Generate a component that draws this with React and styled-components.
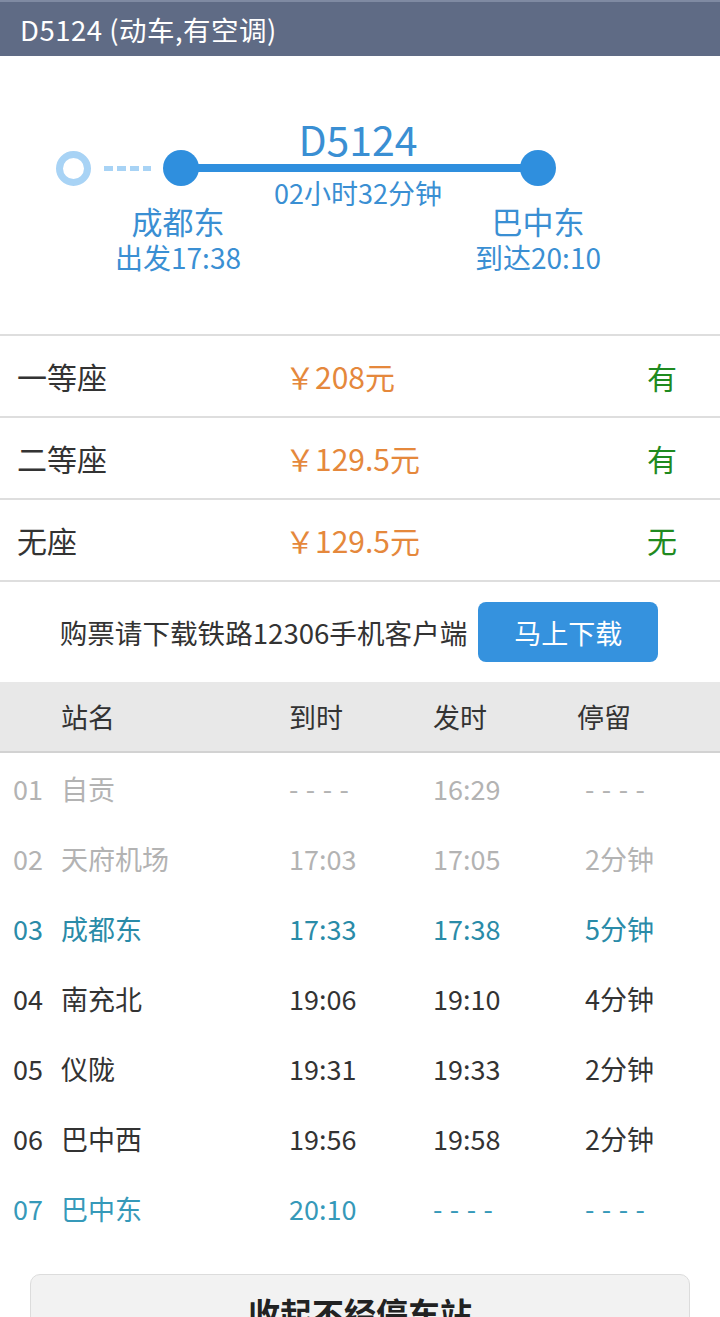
import React from "react";
import styled, { createGlobalStyle } from "styled-components";

const GlobalStyle = createGlobalStyle`
  html, body {
    margin: 0;
    padding: 0;
    background: #fff;
    font-family: "Noto Sans CJK SC", "Noto Sans", sans-serif;
  }
  * { box-sizing: border-box; }
`;

const seats = [
  { name: "一等座", price: "￥208元", left: "有" },
  { name: "二等座", price: "￥129.5元", left: "有" },
  { name: "无座", price: "￥129.5元", left: "无" },
];

const stops = [
  { no: "01", name: "自贡", arrive: "----", depart: "16:29", stay: "----", kind: "past" },
  { no: "02", name: "天府机场", arrive: "17:03", depart: "17:05", stay: "2分钟", kind: "past" },
  { no: "03", name: "成都东", arrive: "17:33", depart: "17:38", stay: "5分钟", kind: "start" },
  { no: "04", name: "南充北", arrive: "19:06", depart: "19:10", stay: "4分钟", kind: "normal" },
  { no: "05", name: "仪陇", arrive: "19:31", depart: "19:33", stay: "2分钟", kind: "normal" },
  { no: "06", name: "巴中西", arrive: "19:56", depart: "19:58", stay: "2分钟", kind: "normal" },
  { no: "07", name: "巴中东", arrive: "20:10", depart: "----", stay: "----", kind: "end" },
];

const stopColors = {
  past: "#b3b3b3",
  start: "#2a8ba8",
  normal: "#333333",
  end: "#3699b9",
};

const Cell = ({ value }) =>
  value === "----" ? <Dash>----</Dash> : <span>{value}</span>;

const App = () => {
  return (
    <Page>
      <GlobalStyle />
      <TopBar>D5124 (动车,有空调)</TopBar>

      <Route>
        <TrainNo>D5124</TrainNo>
        <Track>
          <Ring />
          <Dashes />
          <Dot />
          <Line />
          <Dot />
        </Track>
        <Duration>02小时32分钟</Duration>
        <Ends>
          <End>
            <span className="name">成都东</span>
            <span className="time">出发17:38</span>
          </End>
          <End>
            <span className="name">巴中东</span>
            <span className="time">到达20:10</span>
          </End>
        </Ends>
      </Route>

      <Seats>
        {seats.map((s) => (
          <SeatRow key={s.name}>
            <span className="name">{s.name}</span>
            <span className="price">{s.price}</span>
            <span className="left">{s.left}</span>
          </SeatRow>
        ))}
      </Seats>

      <Download>
        <span>购票请下载铁路12306手机客户端</span>
        <DownloadButton>马上下载</DownloadButton>
      </Download>

      <TableHead>
        <span />
        <span>站名</span>
        <span>到时</span>
        <span>发时</span>
        <span>停留</span>
      </TableHead>

      {stops.map((s) => (
        <StopRow key={s.no} $color={stopColors[s.kind]}>
          <span className="no">{s.no}</span>
          <span>{s.name}</span>
          <Cell value={s.arrive} />
          <Cell value={s.depart} />
          <span className="stay">
            <Cell value={s.stay} />
          </span>
        </StopRow>
      ))}

      <Collapse>收起不经停车站</Collapse>
    </Page>
  );
};

const Page = styled.div`
  width: 720px;
  min-height: 1317px;
  background: #fff;
  padding-bottom: 40px;
`;

const TopBar = styled.div`
  height: 56px;
  background: #5f6b85;
  border-top: 2px solid #7f8aa2;
  color: #fff;
  font-size: 27.5px;
  letter-spacing: 0.5px;
  display: flex;
  align-items: center;
  padding-left: 20px;
`;

const Route = styled.div`
  padding-top: 60px;
  height: 278px;
  display: flex;
  flex-direction: column;
`;

const TrainNo = styled.div`
  text-align: center;
  padding-right: 4px;
  font-size: 41px;
  line-height: 44px;
  color: #3a8fd3;
`;

const Track = styled.div`
  margin-top: -10px;
  height: 36px;
  display: flex;
  align-items: center;
  padding-left: 56px;
`;

const Ring = styled.div`
  width: 35px;
  height: 35px;
  border-radius: 50%;
  border: 7px solid #a8d3f5;
`;

const Dashes = styled.div`
  margin: 0 12px 0 13px;
  width: 47px;
  height: 5px;
  background: repeating-linear-gradient(
    to right,
    #a8d3f5 0 9px,
    transparent 9px 13px
  );
`;

const Dot = styled.div`
  width: 36px;
  height: 36px;
  border-radius: 50%;
  background: #2f8fde;
  flex-shrink: 0;
`;

const Line = styled.div`
  width: 323px;
  height: 8px;
  margin: 0 -1px;
  background: #2f8fde;
`;

const Duration = styled.div`
  text-align: center;
  padding-right: 4px;
  font-size: 27px;
  line-height: 20px;
  margin-top: -3px;
  color: #3a8fd3;
`;

const Ends = styled.div`
  display: grid;
  grid-template-columns: 180px 180px;
  justify-content: space-between;
  padding: 0 92px 0 88px;
`;

const End = styled.div`
  display: flex;
  flex-direction: column;
  align-items: center;
  color: #3a8fd3;
  .name {
    font-size: 31px;
    line-height: 36px;
  }
  .time {
    font-size: 28px;
    line-height: 36px;
  }
`;

const Seats = styled.div`
  border-top: 2px solid #dedede;
`;

const SeatRow = styled.div`
  height: 82px;
  border-bottom: 2px solid #dedede;
  display: grid;
  grid-template-columns: 268px 1fr 73px;
  align-items: center;
  padding-left: 17px;
  font-size: 30px;
  .name {
    color: #333;
  }
  .price {
    color: #e5883c;
  }
  .left {
    color: #1f8a1f;
  }
`;

const Download = styled.div`
  height: 100px;
  display: flex;
  align-items: center;
  justify-content: center;
  gap: 11px;
  padding-right: 2px;
  font-size: 27.6px;
  color: #333;
`;

const DownloadButton = styled.button`
  width: 180px;
  height: 60px;
  border: none;
  border-radius: 8px;
  background: #3592de;
  color: #fff;
  font-family: inherit;
  font-size: 27px;
  padding: 0;
`;

const columns = "61px 228px 144px 144px 1fr";

const TableHead = styled.div`
  height: 71px;
  background: #e8e8e8;
  border-bottom: 2px solid #d2d2d2;
  display: grid;
  grid-template-columns: ${columns};
  align-items: center;
  font-size: 27px;
  color: #333;
`;

const StopRow = styled.div`
  height: 70px;
  display: grid;
  grid-template-columns: ${columns};
  align-items: center;
  font-size: 27px;
  color: ${(p) => p.$color};
  .no {
    padding-left: 13px;
  }
  .stay {
    padding-left: 8px;
  }
`;

const Dash = styled.span`
  letter-spacing: 7.5px;
`;

const Collapse = styled.div`
  margin: 31px 30px 0;
  height: 76px;
  border: 1px solid #dcdcdc;
  border-radius: 10px;
  background: #f2f2f2;
  display: flex;
  align-items: center;
  justify-content: center;
  font-size: 32px;
  font-weight: bold;
  color: #222;
`;

export default App;
